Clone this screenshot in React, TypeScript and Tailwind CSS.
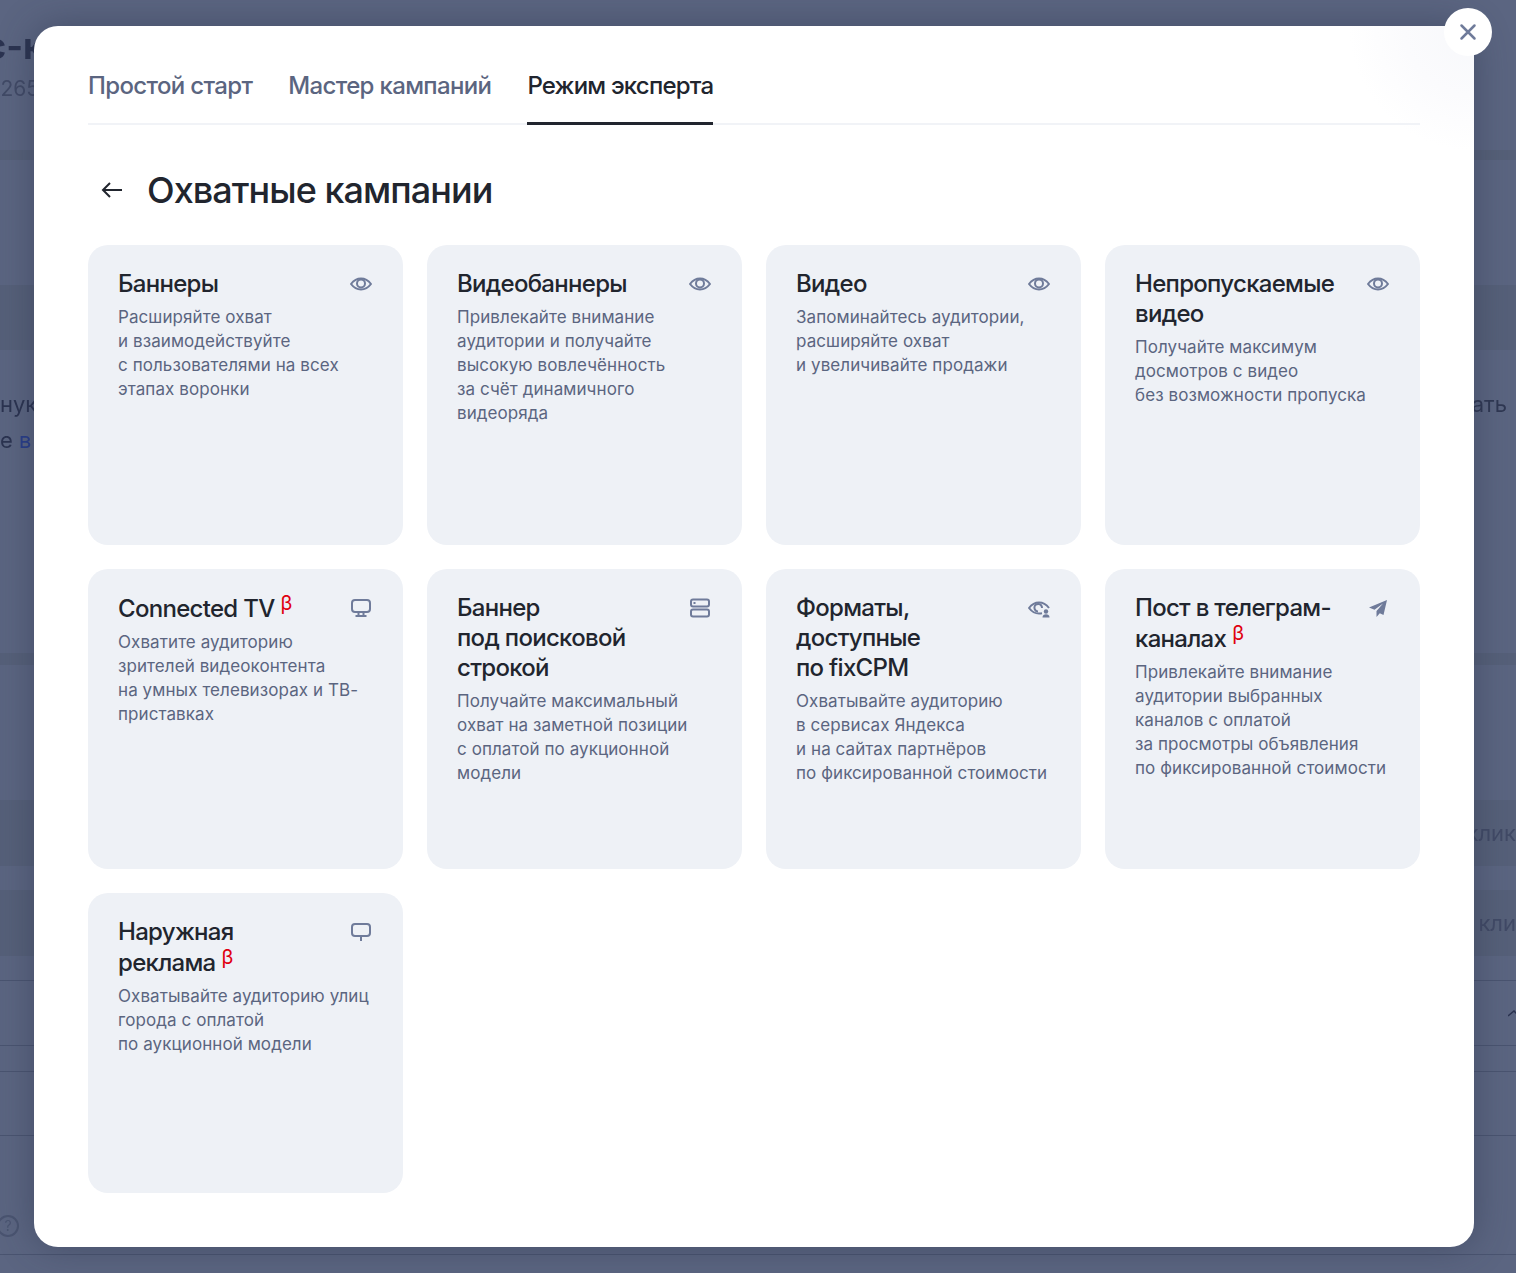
import type { ReactNode } from 'react';

type Card = {
  title: ReactNode;
  text: string[];
  icon: ReactNode;
};

const Beta = () => <span className="ml-[6px] inline-block align-[7px] text-[20px] leading-[20px] font-normal tracking-normal text-[#e0000f]">β</span>;

const EyeIcon = () => (
  <svg width="24" height="24" viewBox="0 0 24 24" fill="none" stroke="#6f7b9a" strokeWidth="2">
    <path d="M2 12c2.600-3.400 5.800-5.500 10-5.500s7.400 2.100 10 5.500c-2.600 3.400-5.800 5.500-10 5.500S4.600 15.400 2 12Z" strokeLinejoin="round" />
    <circle cx="12" cy="11.500" r="4" />
  </svg>
);

const TvIcon = () => (
  <svg width="24" height="24" viewBox="0 0 24 24" fill="none" stroke="#6f7b9a" strokeWidth="2">
    <rect x="3" y="4" width="18" height="12" rx="3" />
    <path d="M9.500 16v3M14.500 16v3M6.500 20h11" />
  </svg>
);

const StackIcon = () => (
  <svg width="24" height="24" viewBox="0 0 24 24" fill="none" stroke="#6f7b9a" strokeWidth="2">
    <rect x="3" y="3.500" width="18" height="7" rx="2" />
    <rect x="3" y="13.500" width="18" height="7" rx="2" />
    <rect x="5.500" y="6" width="2" height="2" fill="#6f7b9a" stroke="none" />
  </svg>
);

const EyeUserIcon = () => (
  <svg width="24" height="24" viewBox="0 0 24 24" fill="none" stroke="#6f7b9a" strokeWidth="2">
    <path d="M15 17.300c-1 .2-2 .3-3 .3-4.200 0-7.400-2.200-10-5.600 2.600-3.400 5.800-5.500 10-5.500s7.400 2.100 10 5.500" strokeLinejoin="round" />
    <path d="M15 12a3.800 3.800 0 1 0-4 3.500" />
    <circle cx="19" cy="15.500" r="2.200" fill="#6f7b9a" stroke="none" />
    <path d="M15.500 21.500c0-2 1.500-3.200 3.500-3.200s3.500 1.200 3.500 3.200Z" fill="#6f7b9a" stroke="none" />
  </svg>
);

const PlaneIcon = () => (
  <svg width="24" height="24" viewBox="0 0 24 24" fill="#6f7b9a">
    <path d="M21 4 3 11.500l5.500 2.300L17 7.500l-6.500 7.500v6l3.300-3.800 3.700 1.800L21 4Z" />
  </svg>
);

const BubbleIcon = () => (
  <svg width="24" height="24" viewBox="0 0 24 24" fill="none" stroke="#6f7b9a" strokeWidth="2">
    <rect x="3" y="4" width="18" height="12" rx="3" />
    <path d="M12 16v5" />
  </svg>
);

const cards: Card[] = [
  {
    title: 'Баннеры',
    text: ['Расширяйте охват', 'и взаимодействуйте', 'с пользователями на всех', 'этапах воронки'],
    icon: <EyeIcon />,
  },
  {
    title: 'Видеобаннеры',
    text: ['Привлекайте внимание', 'аудитории и получайте', 'высокую вовлечённость', 'за счёт динамичного', 'видеоряда'],
    icon: <EyeIcon />,
  },
  {
    title: 'Видео',
    text: ['Запоминайтесь аудитории,', 'расширяйте охват', 'и увеличивайте продажи'],
    icon: <EyeIcon />,
  },
  {
    title: <>Непропускаемые<br />видео</>,
    text: ['Получайте максимум', 'досмотров с видео', 'без возможности пропуска'],
    icon: <EyeIcon />,
  },
  {
    title: <>Connected TV<Beta /></>,
    text: ['Охватите аудиторию', 'зрителей видеоконтента', 'на умных телевизорах и ТВ-', 'приставках'],
    icon: <TvIcon />,
  },
  {
    title: <>Баннер<br />под поисковой<br />строкой</>,
    text: ['Получайте максимальный', 'охват на заметной позиции', 'с оплатой по аукционной', 'модели'],
    icon: <StackIcon />,
  },
  {
    title: <>Форматы,<br />доступные<br />по fixCPM</>,
    text: ['Охватывайте аудиторию', 'в сервисах Яндекса', 'и на сайтах партнёров', 'по фиксированной стоимости'],
    icon: <EyeUserIcon />,
  },
  {
    title: <>Пост в телеграм-<br />каналах<Beta /></>,
    text: ['Привлекайте внимание', 'аудитории выбранных', 'каналов с оплатой', 'за просмотры объявления', 'по фиксированной стоимости'],
    icon: <PlaneIcon />,
  },
  {
    title: <>Наружная<br />реклама<Beta /></>,
    text: ['Охватывайте аудиторию улиц', 'города с оплатой', 'по аукционной модели'],
    icon: <BubbleIcon />,
  },
];

function CampaignCard({ card }: { card: Card }) {
  return (
    <div className="h-[300px] rounded-[20px] bg-[#eef1f6] px-[30px] pt-[24px]">
      <div className="flex items-start justify-between">
        <h3 className="whitespace-nowrap text-[24px] leading-[30px] font-medium tracking-[-0.7px] text-[#21252e]">{card.title}</h3>
        <div className="flex h-[30px] items-center">{card.icon}</div>
      </div>
      <p className="mt-[6px] whitespace-nowrap text-[17px] leading-[24px] tracking-[0.08px] text-[#5b6580]">
        {card.text.map((line) => (
          <span key={line} className="block">{line}</span>
        ))}
      </p>
    </div>
  );
}

function Backdrop() {
  return (
    <div className="h-full overflow-hidden text-[#2b3350] blur-[0.6px]">
      <div className="h-[160px] border-b-[10px] border-[#566078] pt-[24px]">
        <div className="-ml-[15px] text-[36px] leading-[44px] font-bold">с-к</div>
        <div className="-ml-[8px] mt-[6px] text-[21px] leading-[30px] text-[#414a66]">1265</div>
      </div>
      <div className="mt-[125px] h-[65px] bg-[#566079]" />
      <div className="mt-[36px] flex justify-between text-[22px] leading-[36px]">
        <div>
          <div>нук</div>
          <div>е <span className="text-[#283d8a]">в</span></div>
        </div>
        <div className="pr-[9px] text-[#2f3752]">ать</div>
      </div>
      <div className="mt-[195px] h-[12px] bg-[#566079]" />
      <div className="mt-[135px] flex h-[66px] items-center justify-end bg-[#566079] text-[22px] text-[#414a66]">клик</div>
      <div className="mt-[24px] flex h-[66px] items-center justify-end bg-[#566079] text-[22px] text-[#414a66]">кли</div>
      <div className="mt-[24px] flex h-[66px] items-center justify-end border-t border-b border-[#4a5470]">
        <svg width="8" height="12" viewBox="0 0 8 12" fill="none" stroke="#2b3350" strokeWidth="1.500">
          <path d="M0 9l6-5 4 4" />
        </svg>
      </div>
      <div className="mt-[25px] h-[65px] border-t border-b border-[#4a5470]" />
      <div className="mt-[79px] -ml-[3px] flex h-[22px] w-[22px] items-center justify-center rounded-full border-2 border-[#4a5470] text-[14px] leading-none text-[#4a5470]">?</div>
      <div className="mt-[17px] border-t border-[#4a5470]" />
    </div>
  );
}

export default function App() {
  const tabClass = 'text-[24px] leading-[32px] font-[450]';
  return (
    <div className="relative h-[1273px] w-full overflow-hidden bg-[#5b6581] font-['Inter','Noto_Sans',sans-serif]">
      <Backdrop />
      <div className="absolute left-[34px] top-[26px] h-[1221px] w-[1440px] rounded-[24px] bg-[radial-gradient(circle_at_100%_0%,#f7f8fb_0,#fbfbfd_70px,#ffffff_125px)] px-[54px] pt-[44px] shadow-[0_0_36px_rgba(40,48,70,0.45)]">
        <div className="flex gap-[36px] border-b-2 border-[#f1f3f7]">
          <div className={`${tabClass} pb-[21px] tracking-[-0.65px] text-[#5b6580]`}>Простой старт</div>
          <div className={`${tabClass} pb-[21px] tracking-[-0.65px] text-[#5b6580]`}>Мастер кампаний</div>
          <div className={`${tabClass} -mb-[2px] border-b-[3px] border-[#21252e] pb-[20px] tracking-[-0.8px] text-[#21252e]`}>Режим эксперта</div>
        </div>
        <div className="mt-[40px] flex h-[50px] items-center">
          <svg className="ml-[12px] mr-[23px]" width="24" height="24" viewBox="0 0 24 24" fill="none" stroke="#21252e" strokeWidth="2">
            <path d="M22 12H3M10 5l-7 7 7 7" />
          </svg>
          <h1 className="text-[36px] leading-[50px] font-medium tracking-[-0.95px] text-[#21252e]">Охватные кампании</h1>
        </div>
        <div className="mt-[30px] grid grid-cols-4 gap-[24px]">
          {cards.map((card, i) => (
            <CampaignCard key={i} card={card} />
          ))}
        </div>
      </div>
      <button className="absolute left-[1444px] top-[8px] flex h-[48px] w-[48px] items-center justify-center rounded-full bg-white">
        <svg width="24" height="24" viewBox="0 0 24 24" fill="none" stroke="#6f7b9a" strokeWidth="2.500" strokeLinecap="round">
          <path d="M5.500 5.500l13 13M18.500 5.500l-13 13" />
        </svg>
      </button>
    </div>
  );
}
